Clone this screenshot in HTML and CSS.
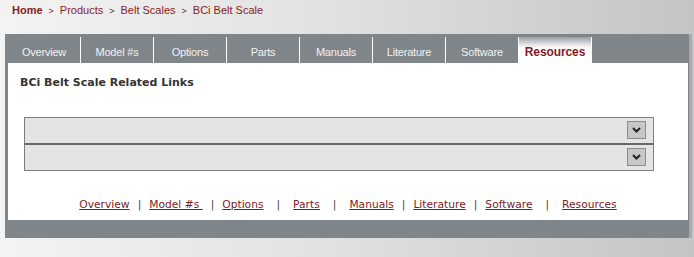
FILE: index.html
```html
<!DOCTYPE html>
<html lang="en">
<head>
  <meta charset="UTF-8">
  <meta name="viewport" content="width=device-width, initial-scale=1.0">
  <title>BCi Belt Scale - Resources</title>
  <link rel="stylesheet" href="styles.css">
</head>
<body>
  <div class="crumbs">
    <a class="home" href="#">Home</a><span class="gt">&gt;</span><a href="#">Products</a><span class="gt">&gt;</span><a href="#">Belt Scales</a><span class="gt">&gt;</span><a href="#">BCi Belt Scale</a>
  </div>

  <div class="panel">
    <div class="tabs">
      <a class="tab" href="#">Overview</a>
      <a class="tab" href="#">Model #s</a>
      <a class="tab" href="#">Options</a>
      <a class="tab" href="#">Parts</a>
      <a class="tab" href="#">Manuals</a>
      <a class="tab" href="#">Literature</a>
      <a class="tab" href="#">Software</a>
      <a class="tab active" href="#">Resources</a>
    </div>

    <div class="content">
      <h2 class="title">BCi Belt Scale Related Links</h2>

      <!-- two empty link pickers -->
      <div class="pickers">
        <div class="pick">
          <span class="arrow">
            <svg width="9" height="6" viewBox="0 0 9 6"><polyline points="1,1 4.5,4.5 8,1" fill="none" stroke="#222" stroke-width="2"/></svg>
          </span>
        </div>
        <div class="pick">
          <span class="arrow">
            <svg width="9" height="6" viewBox="0 0 9 6"><polyline points="1,1 4.5,4.5 8,1" fill="none" stroke="#222" stroke-width="2"/></svg>
          </span>
        </div>
      </div>

      <div class="foot">
        <a href="#">Overview</a><span class="bar">|</span>
        <a href="#">Model #s&nbsp;</a><span class="bar">|</span>
        <a href="#">Options</a><span class="bar wide">|</span>
        <a href="#">Parts</a><span class="bar wide">|</span>
        <a href="#">Manuals</a><span class="bar">|</span>
        <a href="#">Literature</a><span class="bar">|</span>
        <a href="#">Software</a><span class="bar wide">|</span>
        <a href="#">Resources</a>
      </div>
    </div>
  </div>
</body>
</html>
```

FILE: styles.css
```css
body {
  margin: 0;
  height: 257px;
  background: linear-gradient(to right, #f3f3f3 0%, #e2e2e2 45%, #c4c4c4 100%);
  font-family: "Liberation Sans", Arial, sans-serif;
}
a { text-decoration: none; }

.crumbs {
  height: 31px;
  padding: 3px 12px 0;
  font-size: 11px;
  line-height: 14px;
  white-space: nowrap;
}
.crumbs a { color: #8b1a22; }
.crumbs .home { font-weight: bold; }
.crumbs .gt {
  margin: 0 6px;
  font-size: 9px;
  color: #6b2a2e;
}

.panel {
  width: 680px;
  margin-left: 5px;
  padding: 3px 1px 18px 3px;
  background: #80858a;
  box-shadow: 3px 0 0 #a7a9ab;
}

.tabs {
  display: flex;
  height: 26px;
}
.tab {
  width: 72px;
  border-right: 1px solid #fff;
  color: #f2f2f2;
  font-size: 11px;
  letter-spacing: -0.2px;
  line-height: 30px;
  text-align: center;
}
.tab.active {
  background: linear-gradient(to bottom, #9a9ea2 0%, #e6e6e6 30%, #fff 45%);
  color: #8b1a24;
  font-weight: bold;
  font-size: 12px;
  letter-spacing: -0.1px;
}

.content {
  background: #fff;
  padding: 13px 0 8px;
}
.title {
  margin: 0;
  padding: 0 12px;
  font-family: "DejaVu Sans", Verdana, sans-serif;
  font-size: 11px;
  line-height: 14px;
  color: #333;
}

.pickers {
  width: 628px;
  margin: 27px 0 0 16px;
  border: 1px solid #7d7d7d;
  background: #e4e4e4;
}
.pick {
  display: flex;
  justify-content: flex-end;
  align-items: flex-start;
  height: 22px;
  padding: 3px 7px 0 0;
}
.pick + .pick { border-top: 2px solid #676767; }
.arrow {
  display: flex;
  align-items: center;
  justify-content: center;
  width: 17px;
  height: 16px;
  border: 1px solid #8c8c8c;
  background: #c7c7c7;
}

.foot {
  display: flex;
  justify-content: center;
  margin-top: 27px;
  font-family: "DejaVu Sans", Verdana, sans-serif;
  font-size: 10.7px;
  line-height: 14px;
  white-space: pre;
}
.foot a {
  color: #7a1c24;
  text-decoration: underline;
}
.bar { margin: 0 8px; color: #444; }
.bar.wide { margin: 0 13px; }
```
